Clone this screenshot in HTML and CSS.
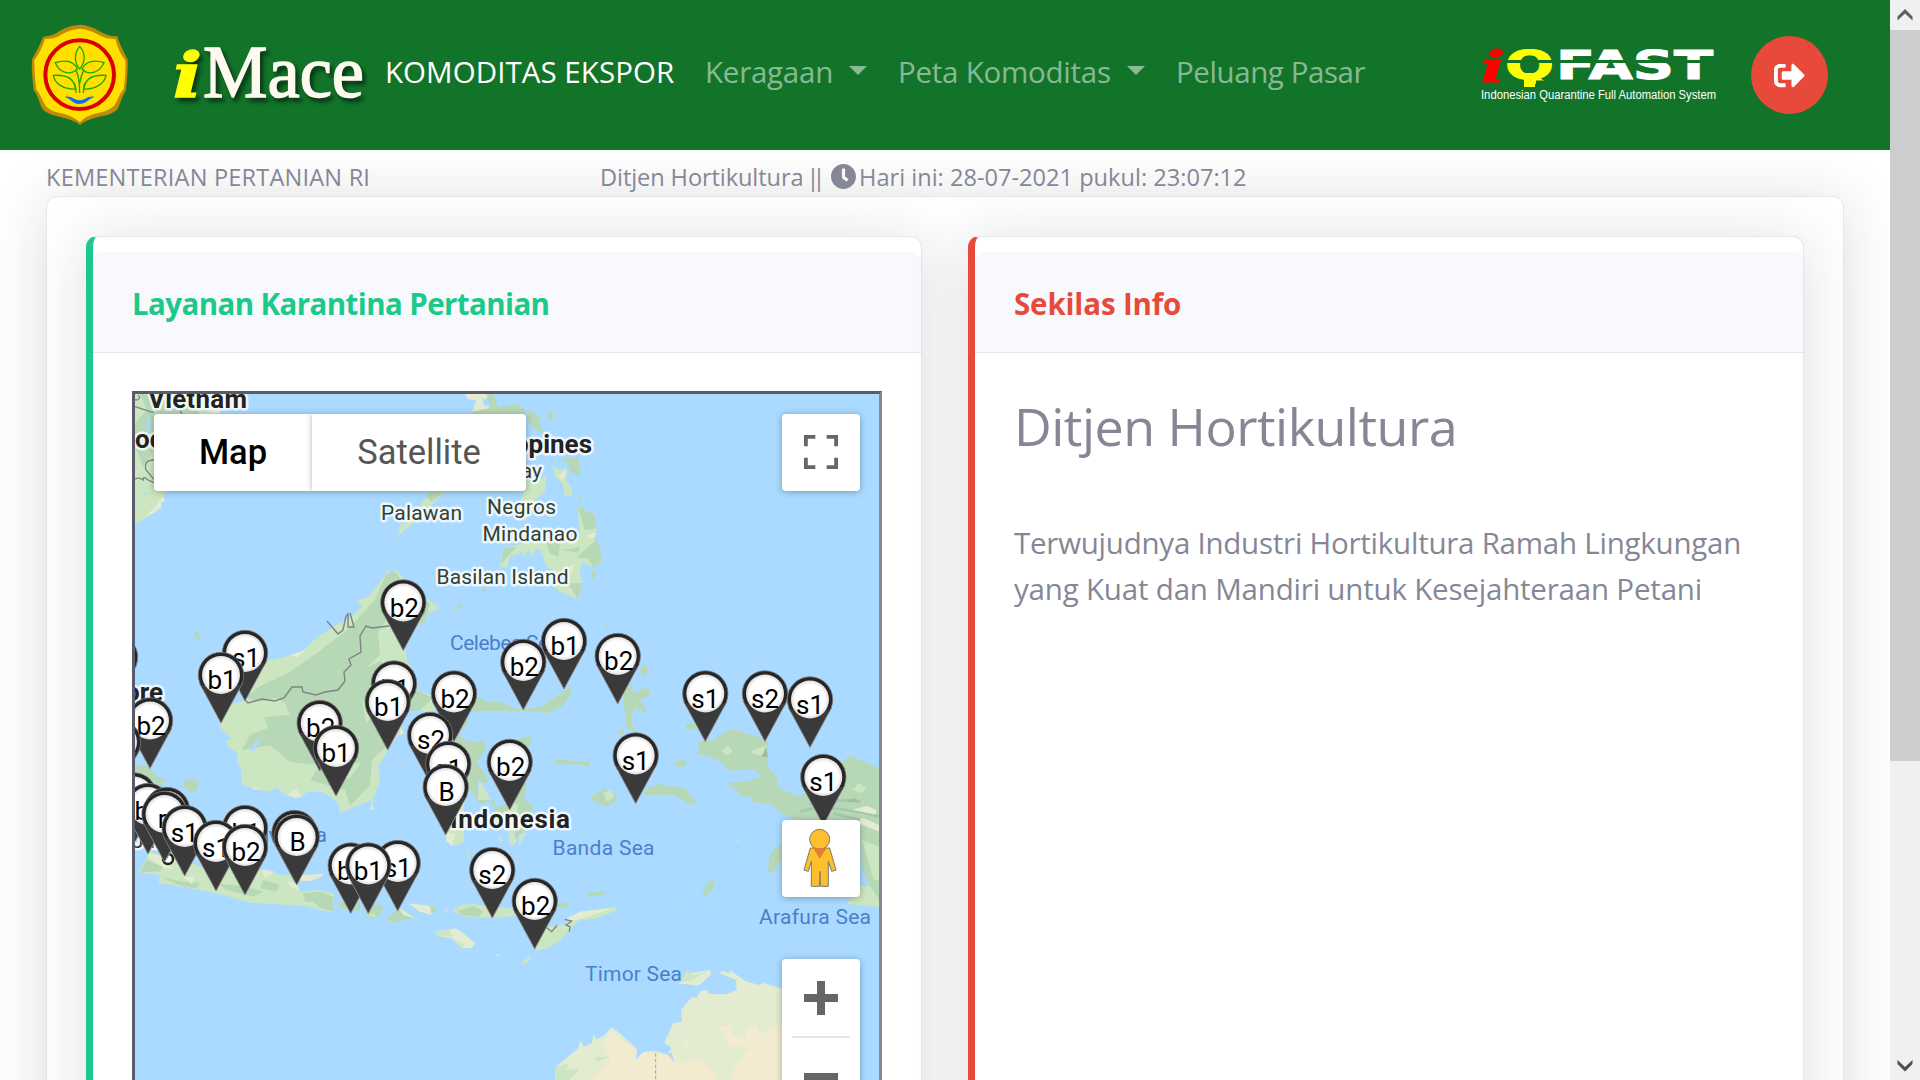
FILE: index.html
```html
<!DOCTYPE html>
<html lang="id">
<head>
<meta charset="utf-8">
<title>iMace - Komoditas Ekspor</title>
<link rel="stylesheet" href="styles.css">
</head>
<body>
<div class="window">
<div class="page">
  <header class="topbar">
    <svg class="emblem" viewBox="0 0 390 360">
      <path fill="#bf8a0a" d="M180 29C205 31 220 38 238 48C258 60 272 64 292 64C300 92 312 112 323 133C324 165 321 194 318 226C305 245 302 268 291 284C270 303 245 301 222 309C205 315 190 320 180 330C170 320 152 315 136 310C112 301 90 303 69 284C58 266 55 243 41 225C38 190 34 165 36 133C48 112 60 90 69 65C88 64 104 60 122 46C140 36 158 31 180 29Z"/>
      <path fill="#ffe000" d="M180 41C203 43 220 50 238 61C255 70 268 72 286 72C292 98 302 118 316 136C317 168 315 194 311 222C296 240 293 258 282 272C264 290 242 291 222 297C202 303 190 311 180 322C168 311 152 304 136 298C112 291 92 290 77 272C66 256 62 240 49 222C45 190 43 165 43 136C57 118 67 96 75 72C94 72 107 69 122 60C140 49 158 43 180 41Z"/>
      <circle cx="179" cy="179" r="103" fill="none" stroke="#d80000" stroke-width="12"/>
      <g fill="none" stroke="#1ea800" stroke-width="4">
        <path d="M179 94C200 118 194 145 179 162C164 145 160 118 179 94Z"/>
        <path d="M172 162C160 135 130 135 106 143C116 170 148 185 172 162ZM186 162C200 135 226 135 252 143C240 170 208 185 186 162Z"/>
        <path d="M166 222C164 196 145 178 100 181C104 205 130 224 166 222ZM192 222C194 196 212 178 258 181C254 205 226 224 192 222Z"/>
        <path d="M168 234C168 215 166 212 164 206M179 234C179 200 176 180 168 166M179 206C182 188 186 176 192 164M190 234C190 218 192 212 194 204"/>
      </g>
      <path fill="#0a6cf0" d="M134 245Q150 243 164 252Q179 260 194 252Q208 243 224 245Q206 252 197 262Q179 272 162 263Q152 252 134 245Z"/>
    </svg>
    <svg class="imace" viewBox="0 0 215 80">
      <text class="imace-i" x="8" y="62" textLength="29" lengthAdjust="spacingAndGlyphs">i</text>
      <text class="imace-rest" x="38" y="62" textLength="161" lengthAdjust="spacingAndGlyphs">Mace</text>
    </svg>
    <nav class="nav">
      <a class="nav-link active t-komoditas">KOMODITAS EKSPOR</a>
      <a class="nav-link t-keragaan">Keragaan<i class="caret"></i></a>
      <a class="nav-link t-peta">Peta Komoditas<i class="caret"></i></a>
      <a class="nav-link t-peluang">Peluang Pasar</a>
    </nav>
    <svg class="iqfast" viewBox="0 0 260 80">
      <text class="iq-i" x="11" y="47" textLength="24" lengthAdjust="spacingAndGlyphs">i</text>
      <text class="iq-word" x="86" y="44" textLength="157" lengthAdjust="spacingAndGlyphs">FAST</text>
      <text class="iq-q" x="35" y="44" textLength="49" lengthAdjust="spacingAndGlyphs">Q</text>
      <rect x="66" y="45.500" width="18" height="9" fill="#127429"/>
      <rect x="54" y="38" width="11" height="14" fill="#ff0"/>
      <rect x="36" y="25" width="210" height="3" fill="#127429"/>
      <text class="iq-tag" x="11" y="64" textLength="235" lengthAdjust="spacingAndGlyphs">Indonesian Quarantine Full Automation System</text>
    </svg>
    <a class="logout"><svg viewBox="0 0 512 512" width="31" height="31"><path fill="#fff" d="M497 273L329 441c-15 15-41 4.500-41-17v-96H152c-13.300 0-24-10.700-24-24v-96c0-13.300 10.700-24 24-24h136V88c0-21.400 25.900-32 41-17l168 168c9.300 9.400 9.300 24.600 0 34zM192 436v-40c0-6.600-5.400-12-12-12H96c-17.700 0-32-14.300-32-32V160c0-17.700 14.300-32 32-32h84c6.600 0 12-5.400 12-12V76c0-6.600-5.400-12-12-12H96c-53 0-96 43-96 96v192c0 53 43 96 96 96h84c6.600 0 12-5.400 12-12z"/></svg></a>
  </header>

  <div class="statusline">
    <span class="ministry">KEMENTERIAN PERTANIAN RI</span>
    <span class="dept">Ditjen Hortikultura <span class="bars">||</span></span>
    <svg class="clock" viewBox="8 8 496 496"><path fill="#858796" d="M256,8C119,8,8,119,8,256S119,504,256,504,504,393,504,256,393,8,256,8Zm92.490,313h0l-20,25a16,16,0,0,1-22.490,2.500h0l-67-49.720a40,40,0,0,1-15-31.230V112a16,16,0,0,1,16-16h32a16,16,0,0,1,16,16V256l58,42.500A16,16,0,0,1,348.490,321Z"/></svg>
    <span class="today">Hari ini: 28-07-2021 pukul: 23:07:12</span>
  </div>

  <main class="panel">
    <section class="card card-green">
      <h6 class="card-header"><span class="t-layanan">Layanan Karantina Pertanian</span></h6>
      <div class="card-body">
        <div class="map">
          <svg class="map-canvas" viewBox="135 394 744 686">
            <defs>
              <radialGradient id="disc"><stop offset=".8" stop-color="#fff"/><stop offset="1" stop-color="#ddd"/></radialGradient>
              <g id="pin">
                <path d="M-21.500 8L0 48L21.500 8Z" fill="#3a3a3a" stroke="#8a8a8a" stroke-width="1"/>
                <circle r="22.700" fill="#262626" stroke="#777" stroke-width=".8"/>
                <path d="M-20 10L0 46L20 10Z" fill="#3a3a3a"/>
                <circle r="19" fill="url(#disc)"/>
              </g>
            </defs>
            <rect x="135" y="394" width="744" height="686" fill="#aadaff"/>
            <g transform="translate(120 380) scale(.33333)">
              <path class="land" d="M45 42H300L290 100L140 333L128 350L135 362L122 370L125 382L100 400L45 432Z"/>
              <path class="hill" d="M60 42H190L240 100L102 210L70 260L45 200V130L80 90Z"/>
              <path class="pale" d="M250 42H300V100H270ZM130 350L135 362L122 370L125 382L100 400L70 415L100 385Z"/>
              <path class="water" d="M80 115L90 110L92 140L82 170L90 200L80 190ZM66 335L90 340L70 343Z"/>
              <path class="line" d="M45 60Q65 60 55 45M45 80L100 98M180 90L185 101M102 240Q70 240 78 270L102 298M45 298Q55 290 70 300Q68 285 84 300L102 308"/>
              <path class="pale" d="M1035 42H1110L1090 65L1110 85L1090 100H1055L1070 60L1045 58Z"/>
              <path class="hill" d="M1100 42H1120L1135 80L1190 75L1215 88V110H1060L1055 95L1110 85Z"/>
              <path class="water" d="M1085 55L1110 68L1095 80Z"/>
              <path class="land" d="M930 335H975L930 380L890 420L855 450L832 468L840 435L865 425L895 385Z"/>
              <path class="hill" d="M930 335H972L935 365L920 350ZM225 750L243 765L236 785L222 765ZM820 545L828 540L825 552ZM1000 682L1027 672L1025 684L1000 690ZM1080 635L1095 623L1100 635Z"/>
              <path class="land" d="M1142 560L1150 515L1200 490V520L1170 530L1160 565Z"/>
            </g>
            <!-- Kalimantan -->
            <path class="land" d="M386 574L387 568L391 576L396 569L403 578L410 592L425 598L440 608L428 613L425 622L410 628L402 655L412 668L417 690L435 697L443 709L425 712L410 703L400 718L403 732L397 737L388 750L378 767L380 780L373 800V809H371V800L340 813L338 802L323 792L307 792L300 798L287 796L277 788L267 792L253 788L242 785L241 770L237 760L238 753L228 747L226 741L232 739L220 727L222 717L230 705L245 700L255 680L263 662L300 653L320 635L350 617L362 607L357 600L368 597Z"/>
            <path class="hill" d="M386 574L396 572L410 595L430 603L425 622L410 628L402 655L417 690L433 698L420 710L400 712L391 742L372 760L370 785L350 806L345 790L310 780L320 765L290 762L270 745L242 750L250 735L268 728L264 717L290 715L285 703L275 698L258 702L246 697L262 685L290 672L317 653L335 639L350 628L360 616L375 600Z"/>
            <path class="land" d="M386 621L378 632L380 655L366 668L380 661L393 668L407 660L404 630ZM300 718L320 726L316 745L302 742ZM330 770L362 762L350 778L333 783ZM362 700L374 712L366 724Z"/>
            <path class="water" d="M251 747L262 737L263 735L253 753Z"/>
            <path class="pale" d="M250 787L260 788L255 790ZM287 795L296 789L301 796L295 798ZM402 728L404 734L399 735ZM371 806L375 809L370 810ZM290 655L305 650L298 657Z"/>
            <path class="line" d="M327 621L338 634L343 630L346 616L348 614V627L354 627L350 613M389 626L372 628L366 626L360 636L361 652L349 659L351 665L344 672L345 681L338 690L325 692L316 695L303 692L302 687L292 687L284 698L275 701L262 699L248 703L245 700"/>
            <!-- Sulawesi and the Moluccas -->
            <path class="hill" d="M473 696L480 697L485 701L500 702L520 710L540 707L557 696L571 686L571 694L563 706L548 713L520 711L480 711L468 712V722L459 735L468 742L485 741L486 750L476 762L487 776L488 783L478 782V800L489 799L495 808L515 800L515 780L495 775L492 765L512 748L518 739L532 736L532 743L524 750L530 756L518 762L520 772L527 788L524 800L533 805L530 826L520 834L516 840L512 830V815L495 820V800L480 804L462 778L455 748L456 735L465 720Z"/>
            <path class="land" d="M459 790L464 800V842L454 846L446 838V822L455 815ZM479 781L486 790L490 800L478 800ZM508 800L518 805L514 840L509 841ZM519 835L527 832L519 846ZM499 835L503 840L500 843Z"/>
            <path class="pale" d="M446 832L455 834L452 846L446 841Z"/>
            <!-- Java and the lesser Sundas -->
            <g transform="translate(120 700) scale(.33333)">
              <path class="hill" d="M45 195H75L90 205L110 230L138 235L125 260L60 220L45 220ZM190 245L205 237L237 242L230 270L215 278L190 265Z"/>
              <path class="land" d="M90 455L115 463L190 475L260 510L340 505L440 510L480 525L520 522L540 575L600 570L643 582L640 637L600 630L560 618L500 615L390 608L310 585L240 570L185 560L115 548L120 525L55 517Z"/>
              <path class="hill" d="M80 480L130 500L120 515H60ZM120 530L190 545L240 548L230 565L185 558ZM290 550L380 560L430 575L400 590L320 570ZM430 540L480 555L470 575L420 565ZM550 580L600 575L640 590V635L600 625L580 605L555 605Z"/>
              <path class="pale" d="M85 460L115 465L160 505L135 505L90 478ZM190 530L225 530L215 552ZM425 508L465 515L435 533ZM500 545L530 550L540 572L520 565ZM535 525L610 522L605 530L570 543L535 542Z"/>
              <path class="hill" d="M652 606H720V632L665 627ZM738 610L792 618L775 655L740 650ZM835 625L885 652L818 668L798 658ZM862 606L900 618L945 617L950 640L915 630Z"/>
              <path class="pale" d="M835 622L885 655L850 645ZM865 610L930 617L935 645L900 635ZM975 630L982 628L980 638ZM1126 765L1136 762L1134 769Z"/>
              <path class="land" d="M738 645L760 640L775 655ZM996 635L1020 615L1060 612L1110 620L1200 628V645L1140 653L1040 650Z"/>
              <path class="hill" d="M1010 635L1060 617L1090 635L1075 650L1030 645Z"/>
              <path class="pale" d="M945 695L1008 685L1030 700L1065 730L1055 745L1025 743L995 715L950 708Z"/>
              <path class="land" d="M945 695L985 690L1000 710L950 708ZM1000 715L1035 735L1025 743ZM1045 450L1043 480L1050 470ZM1165 425L1175 400L1190 420L1180 440Z"/>
            </g>
            <g transform="translate(500 380) scale(.33333)">
              <path class="hill" d="M10 85L50 70L72 85L70 100L30 100ZM88 90L122 110L115 125L132 160L105 150L80 120ZM142 115L145 97L160 98L157 118ZM190 235L235 230L242 285L215 280ZM238 340L246 350L240 370Z"/>
              <path class="land" d="M162 255L175 270L200 265L200 305L215 325L218 345L195 350L188 310L165 290ZM60 380L80 300L110 310L138 285L135 335L100 365L80 420H60Z"/>
              <path class="land" d="M233 378L285 405L290 450L283 480L305 515L303 550L275 560L245 545L240 580L248 615L232 657L180 635L155 615L200 610L190 590L140 560L125 515L110 505L95 530L85 510L75 530L60 510L25 520L15 560L0 565L5 535L25 500L70 492L240 470Z"/>
              <path class="hill" d="M233 378L285 405L290 445L255 450ZM262 500L290 480L305 515L303 550L280 565L265 535L230 535ZM135 480L180 490L175 530L150 520ZM190 510L240 500L235 520ZM10 505L50 500L5 550ZM275 570L287 578L280 600L272 590ZM190 610L248 610L232 657L215 625ZM318 730L327 738L322 748ZM420 870L430 853L442 858L440 885L425 888ZM372 930L395 910L400 940L445 920L448 945L420 960L445 1000L405 985L390 1020L370 980Z"/>
              <path class="pale" d="M258 465L290 458L280 475L270 475ZM175 285L200 270L188 305ZM205 565L222 552L218 580Z"/>
            </g>
            <!-- Papua, Timor and Australia -->
            <g transform="translate(500 700) scale(.33333)">
              <path class="hill" d="M372 0H390L395 70L410 95L380 85ZM345 95L370 88L372 105ZM555 70L600 72L590 90L560 85ZM590 125L640 120L675 95L705 88L770 110L805 122L803 200L835 238L828 252L860 275L900 290L1000 210L1050 165L1138 205V600L1105 550L1085 500L1080 420L900 360L850 345L815 312L760 307L750 290L725 290L705 265L672 250L730 245L785 232L765 208L690 212L655 180L590 160L600 140ZM160 177L265 187L270 208L255 195L170 192ZM520 187L555 178L560 198L535 200ZM270 290L310 267L345 280L352 300L325 318L285 308ZM440 265L475 252L555 265L590 308L575 315L520 285L465 285L430 285ZM803 515L810 460L850 428V470L820 515ZM606 585L625 545L647 540L640 560L615 593ZM508 583L521 586L514 596ZM708 442L720 432V455ZM260 580L320 572L315 583L262 592ZM160 612L212 607L210 618L170 625Z"/>
              <path class="land" d="M308 278L335 270L345 290L322 305ZM665 155L685 135L697 155L680 165ZM750 155L800 135V165L770 165ZM1060 270L1075 250L1100 265L1085 280ZM1085 420L1138 440V540L1120 540L1110 500ZM1040 612L1075 558L1110 558L1138 600V622ZM65 785L95 765L85 785L68 792ZM0 630L40 635L0 648ZM103 742L140 680L190 675L240 635L345 620L352 630L290 655L235 662L180 720L150 742L110 753Z"/>
              <path class="pale" d="M200 655L240 635L335 625L280 645L210 665ZM1055 330L1100 318L1130 330L1125 350L1085 345ZM1050 360L1090 355L1138 375V395ZM535 850L570 820L630 810L633 825L595 857Z"/>
              <path class="land" d="M540 848L560 810L580 825L620 815L575 840Z"/>
              <path fill="none" stroke="#a4c8a8" stroke-width="8" d="M900 335L960 320L1040 330L1138 350M930 310L1040 300L1080 305M1000 340L1080 360"/>
              <path class="gray" d="M785 170L798 140L803 172ZM1040 305L1060 295L1085 307Z"/>
              <path class="line" d="M140 683L155 695L168 680L170 675M195 658L215 663L198 675L210 680L208 695"/>
              <path class="pale" d="M165 1140L168 1100L235 1045L240 1022L252 1040L275 1030L280 1003L290 1018L315 1005L335 982L360 1000L410 1047L408 1078L428 1070L430 1055L465 1053L500 1063L515 1045L493 1028L520 970L545 965L543 930L575 892L590 893L602 873L620 870L628 882L680 882L710 870L708 840L660 820L665 812L690 820L688 810L740 845L780 855L788 848L850 867V1140Z"/>
              <path fill="#f2ebd0" d="M335 990L355 1015L410 1050L408 1078L430 1057L500 1065L540 1090L600 1080L640 1110L650 1140H270L330 1080L310 1030ZM655 980L690 975L700 1010L740 1015L735 985L770 975L780 1005L850 970V1140H690L710 1090L750 1040L690 1040ZM550 1025L570 1010L560 1040Z"/>
              <path class="land" d="M168 1100L205 1090L200 1110L240 1105L210 1140H166ZM285 1072L330 1070L290 1085Z"/>
              <path class="water" d="M500 1060L515 1058L523 1088Z"/>
              <path d="M467 1060V1140" stroke="#a8a290" stroke-width="3" stroke-dasharray="10 7"/>
            </g>
            <g class="country">
              <text x="148" y="408" textLength="99">Vietnam</text>
              <text x="135" y="448">od</text>
              <text x="163" y="701" text-anchor="end">Singapore</text>
              <text x="592" y="453" text-anchor="end">Philippines</text>
              <text x="450" y="828" textLength="120">Indonesia</text>
            </g>
            <g class="place">
              <text x="381" y="520" textLength="81">Palawan</text>
              <text x="542" y="478" text-anchor="end">Panay</text>
              <text x="487" y="514" textLength="69">Negros</text>
              <text x="482.500" y="541" textLength="95">Mindanao</text>
              <text x="436.500" y="584" textLength="132">Basilan Island</text>
              <text x="132" y="848">Jakarta</text>
            </g>
            <g class="sea">
              <text x="450" y="650" textLength="110">Celebes Sea</text>
              <text x="247" y="841.500" textLength="80">Java Sea</text>
              <text x="552.500" y="855" textLength="102">Banda Sea</text>
              <text x="759" y="924" textLength="112">Arafura Sea</text>
              <text x="585" y="981" textLength="97">Timor Sea</text>
            </g>
            <circle cx="168" cy="859" r="5" fill="#fff" stroke="#222" stroke-width="2.500"/>
            <g class="pins">
              <g transform="translate(115 657)"><use href="#pin"/></g>
              <g transform="translate(403.300 602.500)"><use href="#pin"/><text x="1" y="14">b2</text></g>
              <g transform="translate(564 641)"><use href="#pin"/><text x="1" y="14">b1</text></g>
              <g transform="translate(245 653)"><use href="#pin"/><text x="1" y="14">s1</text></g>
              <g transform="translate(617.700 656)"><use href="#pin"/><text x="1" y="14">b2</text></g>
              <g transform="translate(523.300 662)"><use href="#pin"/><text x="1" y="14">b2</text></g>
              <g transform="translate(221 675)"><use href="#pin"/><text x="1" y="14">b1</text></g>
              <g transform="translate(394 683.500)"><use href="#pin"/><text x="1" y="14">b1</text></g>
              <g transform="translate(454 693.500)"><use href="#pin"/><text x="1" y="14">b2</text></g>
              <g transform="translate(705.300 693.500)"><use href="#pin"/><text y="14">s1</text></g>
              <g transform="translate(765 693.500)"><use href="#pin"/><text y="14">s2</text></g>
              <g transform="translate(810 699.500)"><use href="#pin"/><text y="14">s1</text></g>
              <g transform="translate(387.700 702)"><use href="#pin"/><text x="1" y="14">b1</text></g>
              <g transform="translate(150 720.500)"><use href="#pin"/><text x="1" y="14">b2</text></g>
              <g transform="translate(118 742)"><use href="#pin"/></g>
              <g transform="translate(319.700 723)"><use href="#pin"/><text x="1" y="14">b2</text></g>
              <g transform="translate(430 735)"><use href="#pin"/><text x="1" y="14">s2</text></g>
              <g transform="translate(336 748)"><use href="#pin"/><text y="14">b1</text></g>
              <g transform="translate(635.700 755.500)"><use href="#pin"/><text y="14">s1</text></g>
              <g transform="translate(509.700 762)"><use href="#pin"/><text x="1" y="14">b2</text></g>
              <g transform="translate(448.300 764)"><use href="#pin"/><text y="14">s1</text></g>
              <g transform="translate(823.300 777)"><use href="#pin"/><text y="14">s1</text></g>
              <g transform="translate(445.700 787)"><use href="#pin"/><text x="1" y="14">B</text></g>
              <g transform="translate(134 795.500)"><use href="#pin"/></g>
              <g transform="translate(148 806)"><use href="#pin"/><text x="1" y="14">b1</text></g>
              <g transform="translate(167 810)"><use href="#pin"/></g>
              <g transform="translate(164.500 814)"><use href="#pin"/><text x="5" y="14">r1</text></g>
              <g transform="translate(245 828)"><use href="#pin"/><text x="1" y="14">b1</text></g>
              <g transform="translate(184.700 828)"><use href="#pin"/><text y="14">s1</text></g>
              <g transform="translate(294.500 833)"><use href="#pin"/></g>
              <g transform="translate(296.700 837)"><use href="#pin"/><text x="1" y="14">B</text></g>
              <g transform="translate(216 843)"><use href="#pin"/><text y="14">s1</text></g>
              <g transform="translate(245 847)"><use href="#pin"/><text x="1" y="14">b2</text></g>
              <g transform="translate(397.700 863)"><use href="#pin"/><text y="14">s1</text></g>
              <g transform="translate(350.700 865.500)"><use href="#pin"/><text x="1" y="14">b1</text></g>
              <g transform="translate(368.300 865.500)"><use href="#pin"/><text y="14">b1</text></g>
              <g transform="translate(492.300 870)"><use href="#pin"/><text y="14">s2</text></g>
              <g transform="translate(534.700 901)"><use href="#pin"/><text x="1" y="14">b2</text></g>
            </g>
          </svg>
          <div class="map-types"><button class="type-map">Map</button><button class="type-sat">Satellite</button></div>
          <div class="map-tools">
            <div class="tool"><svg width="34" height="34" viewBox="0 0 18 18"><path fill="#666" d="M0 0v6h2V2h4V0H0zm16 0h-4v2h4v4h2V0h-2zm0 16h-4v2h6v-6h-2v4zM2 12H0v6h6v-2H2v-4z"/></svg></div>
            <div class="tool pegman"><svg width="34" height="60" viewBox="0 0 102 180">
              <g fill="#fdbf2d" stroke="#7a7a70" stroke-width="3"><path d="M22 60H80L99 126L86 130L76 100V175H52L51 130L49 175H25V100L16 130L3 126Z"/><circle cx="50" cy="34" r="30"/></g>
              <path fill="#e07f2e" d="M31 61H70L50 92Z"/></svg></div>
            <div class="tool zoomer"><span class="plus"></span><span class="rule"></span><span class="minus"></span></div>
          </div>
        </div>
      </div>
    </section>
    <section class="card card-red">
      <h6 class="card-header"><span class="t-sekilas">Sekilas Info</span></h6>
      <div class="card-body">
        <h1>Ditjen Hortikultura</h1>
        <p><span class="p1">Terwujudnya Industri Hortikultura Ramah Lingkungan</span><br><span class="p2">yang Kuat dan Mandiri untuk Kesejahteraan Petani</span></p>
      </div>
    </section>
  </main>
</div>
<div class="scrollbar">
  <svg viewBox="0 0 30 30" width="30" height="30"><path d="M7.500 16.500L15 9L22.500 16.500V20.500L15 13.500L7.500 20.500Z" fill="#606060"/></svg>
  <div class="thumb"></div>
  <svg viewBox="0 0 30 30" width="30" height="30"><path d="M7.500 10L15 17L22.500 10V14L15 21.500L7.500 14Z" fill="#505050"/></svg>
</div>
</div>
</body>
</html>
```
FILE: styles.css
```css
* { box-sizing: border-box; }
body { margin: 0; background: #fff; color: #858796; font-family: "Open Sans", "Noto Sans", sans-serif; font-size: 29.5px; line-height: 46px; overflow: hidden; }
.window { display: flex; width: 1920px; height: 1080px; overflow: hidden; }
.page { width: 1890px; height: 1080px; overflow: hidden; display: flex; flex-direction: column; }

.topbar { flex: none; height: 150px; background: #127429; display: flex; align-items: center; padding-left: 20px; position: relative; z-index: 2; }
.emblem { width: 130px; height: 120px; flex: none; }
.imace { width: 215px; height: 80px; flex: none; margin-left: 15px; overflow: visible; filter: drop-shadow(3px 4px 2px rgba(0,0,0,.55)); }
.imace-i { font: italic bold 62px "DejaVu Serif", serif; fill: #ff0; stroke: #ff0; stroke-width: 1.5; }
.imace-rest { font: 74px "Liberation Serif", serif; fill: #fffaf0; stroke: #fffaf0; stroke-width: 1.5; }
.nav { display: flex; margin-left: 5px; height: 46px; margin-top: -6px; width: 1085px; flex: none; }
.nav-link { color: rgba(255,255,255,.5); white-space: nowrap; display: flex; align-items: center; flex: none; letter-spacing: -.25px; }
.nav-link.active { color: #fff; letter-spacing: .05px; }
.t-komoditas { width: 320px; }
.t-keragaan { width: 193px; }
.t-peta { width: 278px; }
.t-peluang { letter-spacing: -.42px; }
.caret { border: 9px solid transparent; border-top-color: currentColor; border-bottom: 0; margin: -3px 0 0 16px; }
.iqfast { width: 260px; height: 80px; flex: none; overflow: visible; }
.iq-i { font: italic bold 42px "DejaVu Serif", serif; fill: #f00; stroke: #f00; stroke-width: 1; }
.iq-q { font: bold 39px "DejaVu Sans", sans-serif; fill: #ff0; stroke: #ff0; stroke-width: 1; }
.iq-word { font: bold 39px "DejaVu Sans", sans-serif; fill: #fff; stroke: #fff; stroke-width: 1; }
.iq-tag { font: 12.5px "Liberation Sans", sans-serif; fill: #fff; }
.logout { width: 77px; height: 78px; border-radius: 50%; background: #e74a3b; display: flex; align-items: center; justify-content: center; margin-left: 21px; flex: none; }

.statusline { flex: none; height: 46px; display: flex; padding-left: 46px; font-size: 23.6px; line-height: 55px; white-space: nowrap; position: relative; z-index: 1; }
.ministry { width: 554px; letter-spacing: .18px; }
.dept { width: 231px; letter-spacing: -.1px; }
.bars { letter-spacing: -7px; margin-left: -3px; }
.clock { width: 25px; height: 25px; margin: 14px 3px 0 0; }

.panel { flex: none; margin-left: 46px; width: 1798px; height: 1300px; border: 1px solid #e3e6f0; border-radius: 11px; background: #fff; box-shadow: 0 4px 60px rgba(30,30,30,.14); padding: 39px 39px; display: grid; grid-template-columns: 836px 836px; gap: 46px; }
.card { border: 1px solid #e3e6f0; border-left: 7px solid; border-radius: 11px; background: #fff; box-shadow: 0 4px 60px rgba(30,30,30,.14); padding-top: 15px; }
.card-green { border-left-color: #1cc88a; }
.card-red { border-left-color: #e74a3b; }
.card-header { margin: 0; height: 101px; background: #f8f9fc; border-bottom: 1px solid #e3e6f0; border-radius: 10px 10px 0 0; padding: 29px 39px; font-size: 29.5px; font-weight: 700; line-height: 46px; }
.card-green .card-header { color: #1cc88a; }
.card-red .card-header { color: #e74a3b; }
.t-layanan { letter-spacing: -.6px; }
.t-sekilas { letter-spacing: -.15px; }
.card-body { padding: 38px 39px; }
h1 { margin: 2px 0 0; font-weight: 400; font-size: 52px; line-height: 65px; letter-spacing: -.5px; white-space: nowrap; }
p { margin: 62px 0 0; white-space: nowrap; letter-spacing: -.24px; }
.p2 { letter-spacing: -.19px; }

.map { position: relative; width: 750px; height: 800px; border: 3px solid; border-color: #5a5c69 #858796 #858796 #5a5c69; background: #aadaff; overflow: hidden; font-family: Roboto, sans-serif; }
.map-canvas { display: block; width: 744px; height: 686px; }
.land { fill: #cbe6c0; }
.hill { fill: #b7d8b6; }
.pale { fill: #e3ecd0; }
.water { fill: #aadaff; }
.gray { fill: #a3b8a6; }
.line { fill: none; stroke: #7d8582; stroke-width: 1.4; }
g[transform*="scale"] .line { stroke-width: 4; }
.country { font-size: 26px; font-weight: 700; fill: #222; stroke: #fff; stroke-opacity: .8; stroke-width: 5; paint-order: stroke; stroke-linejoin: round; }
.place { font-size: 21px; fill: #34402f; stroke: #fff; stroke-opacity: .75; stroke-width: 5; paint-order: stroke; stroke-linejoin: round; }
.sea { font-size: 21px; fill: #4b7fcb; }
.pins text { font-size: 26px; fill: #000; text-anchor: middle; }

.map-types { position: absolute; left: 19px; top: 20px; width: 372px; height: 77px; display: flex; border-radius: 4px; box-shadow: 0 1px 7px rgba(0,0,0,.3); overflow: hidden; }
.map-types button { border: 0; padding: 0 0 2px; background: #fff; font: 34.5px Roboto, sans-serif; color: #565656; text-align: center; }
.map-types .type-map { width: 158px; color: #000; font-weight: 500; }
.map-types .type-sat { width: 214px; box-shadow: 0 0 6px rgba(0,0,0,.3); }
.map-tools { position: absolute; right: 19px; top: 20px; width: 78px; display: flex; flex-direction: column; }
.tool { height: 77px; background: #fff; border-radius: 4px; box-shadow: 0 1px 7px rgba(0,0,0,.3); display: flex; align-items: center; justify-content: center; padding-bottom: 1px; }
.pegman { margin-top: 329px; padding-right: 2px; }
.zoomer { height: 156px; margin-top: 62px; flex-direction: column; justify-content: flex-start; padding-top: 22px; }
.plus { width: 34px; height: 34px; background: linear-gradient(#666,#666) center/34px 8px no-repeat, linear-gradient(#666,#666) center/8px 34px no-repeat; }
.rule { width: 58px; height: 2px; background: #e6e6e6; margin-top: 21px; }
.minus { width: 34px; height: 8px; background: #666; margin-top: 35px; }

.scrollbar { width: 30px; height: 1080px; background: #f0f0f0; display: flex; flex-direction: column; justify-content: space-between; }
.thumb { height: 731px; background: #cdcdcd; margin-bottom: auto; }
```
